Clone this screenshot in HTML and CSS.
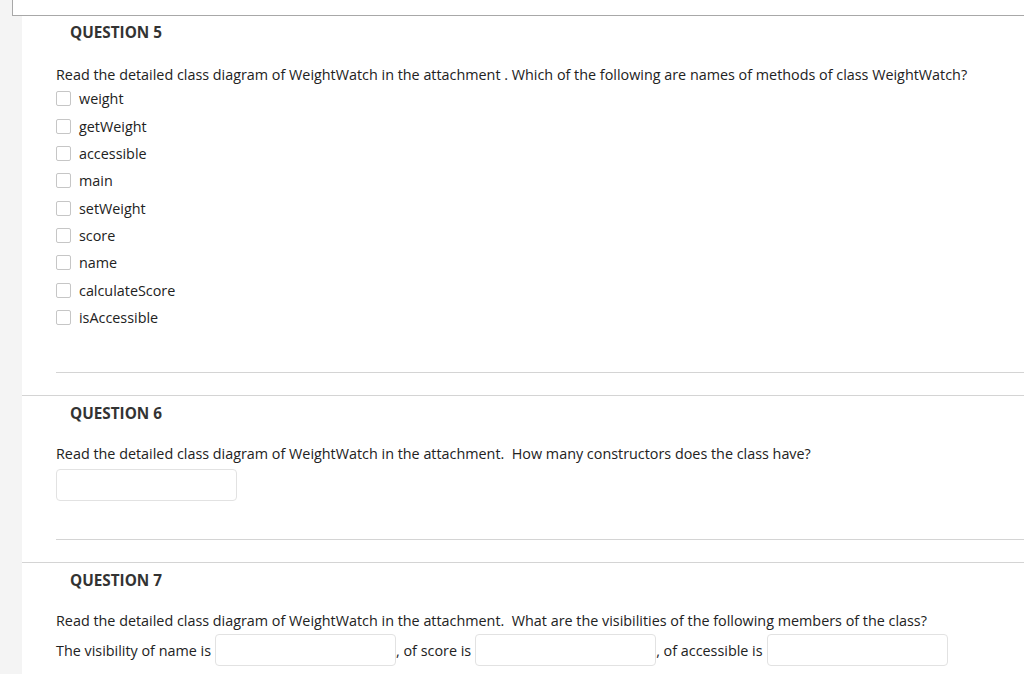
FILE: index.html
```html
<!DOCTYPE html>
<html>
<head>
<meta charset="utf-8">
<link rel="stylesheet" href="styles.css">
</head>
<body>
<div class="topbox"></div>
<div class="main">
  <section class="question first">
    <h3 class="qhead">QUESTION 5</h3>
    <div class="qbody">
      <p class="qtext">Read the detailed class diagram of WeightWatch in the attachment . Which of the following are names of methods of class WeightWatch?</p>
      <ul class="options">
        <li class="opt"><span class="box"></span>weight</li>
        <li class="opt"><span class="box"></span>getWeight</li>
        <li class="opt"><span class="box"></span>accessible</li>
        <li class="opt"><span class="box"></span>main</li>
        <li class="opt"><span class="box"></span>setWeight</li>
        <li class="opt"><span class="box"></span>score</li>
        <li class="opt"><span class="box"></span>name</li>
        <li class="opt"><span class="box"></span>calculateScore</li>
        <li class="opt"><span class="box"></span>isAccessible</li>
      </ul>
      <hr class="sep sep-a">
    </div>
  </section>
  <section class="question">
    <h3 class="qhead">QUESTION 6</h3>
    <div class="qbody">
      <p class="qtext">Read the detailed class diagram of WeightWatch in the attachment.&nbsp; How many constructors does the class have?</p>
      <div class="field single"></div>
      <hr class="sep sep-b">
    </div>
  </section>
  <section class="question">
    <h3 class="qhead">QUESTION 7</h3>
    <div class="qbody">
      <p class="qtext">Read the detailed class diagram of WeightWatch in the attachment.&nbsp; What are the visibilities of the following members of the class?</p>
      <div class="fillrow">
        <span>The visibility of name is</span><span class="field inl"></span><span>, of score is</span><span class="field inl"></span><span>, of accessible is</span><span class="field inl"></span>
      </div>
    </div>
  </section>
</div>
</body>
</html>
```
FILE: styles.css
```css
html, body {
  margin: 0;
  padding: 0;
}
body {
  width: 1024px;
  height: 674px;
  overflow: hidden;
  background: linear-gradient(to right, #f4f4f4 22px, #ffffff 22px);
  font-family: "Open Sans", "Liberation Sans", sans-serif;
  color: #222222;
}
.topbox {
  margin-left: 12px;
  height: 15px;
  background: #ffffff;
  border-left: 1px solid #a8a8a8;
  border-bottom: 1px solid #a8a8a8;
}
.main {
  margin-left: 22px;
}
.question {
  border-top: 1px solid #d4d4d4;
  padding-top: 7px;
}
.question.first {
  border-top: none;
  padding-top: 6px;
}
.qhead {
  margin: 0 0 0 48px;
  font-size: 15.3px;
  line-height: 20px;
  font-weight: 700;
  color: #333333;
}
.first .qtext {
  margin-top: 23px;
}
.qbody {
  padding-left: 34px;
}
.qtext {
  margin: 21px 0 0 0;
  font-size: 14.37px;
  line-height: 20px;
}
.options {
  list-style: none;
  margin: 0;
  padding: 0;
}
.opt {
  height: 27.375px;
  display: flex;
  align-items: center;
  font-size: 14.37px;
}
.box {
  width: 13px;
  height: 13px;
  border: 1px solid #c6c6c6;
  border-radius: 2px;
  margin-right: 8px;
  flex: none;
}
.sep {
  border: none;
  border-top: 1px solid #d4d4d4;
  margin: 0;
}
.sep-a {
  margin-top: 41px;
  margin-bottom: 22px;
}
.sep-b {
  margin-top: 38px;
  margin-bottom: 22px;
}
.field {
  border: 1px solid #e2e2e2;
  border-radius: 4px;
  background: #ffffff;
  box-sizing: border-box;
}
.single {
  margin-top: 5px;
  width: 181px;
  height: 32px;
}
.fillrow {
  margin-top: 3px;
  display: flex;
  align-items: center;
  font-size: 14.37px;
}
.inl {
  width: 181px;
  height: 32px;
  margin: 0 0 0 4px;
}
```
